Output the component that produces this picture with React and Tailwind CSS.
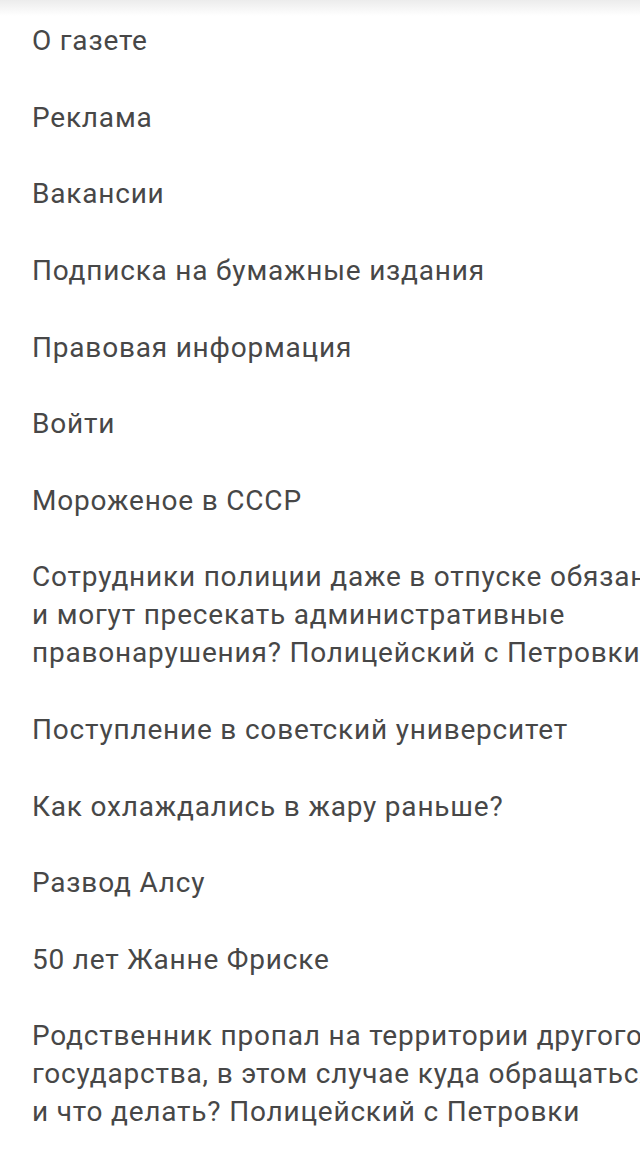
import React from 'react';

const links = [
  'О газете',
  'Реклама',
  'Вакансии',
  'Подписка на бумажные издания',
  'Правовая информация',
  'Войти',
  'Мороженое в СССР',
  'Сотрудники полиции даже в отпуске обязаны и могут пресекать административные правонарушения? Полицейский с Петровки',
  'Поступление в советский университет',
  'Как охлаждались в жару раньше?',
  'Развод Алсу',
  '50 лет Жанне Фриске',
  'Родственник пропал на территории другого государства, в этом случае куда обращаться и что делать? Полицейский с Петровки',
];

export default function App() {
  return (
    <div className="relative w-[640px] min-h-[1159px] overflow-hidden bg-white" style={{ fontFamily: 'Roboto, "Noto Sans", sans-serif' }}>
      <div className="pointer-events-none absolute inset-x-0 top-0 h-[16px] bg-gradient-to-b from-[#ececec] to-white/0" />
      <ul className="w-[706px] pt-[3px]">
        {links.map((t) => (
          <li key={t} className="px-[32px] py-[19.3px]">
            <a className="block text-[28px] leading-[38px] tracking-[0.8px] text-[#474747]">{t}</a>
          </li>
        ))}
      </ul>
    </div>
  );
}
